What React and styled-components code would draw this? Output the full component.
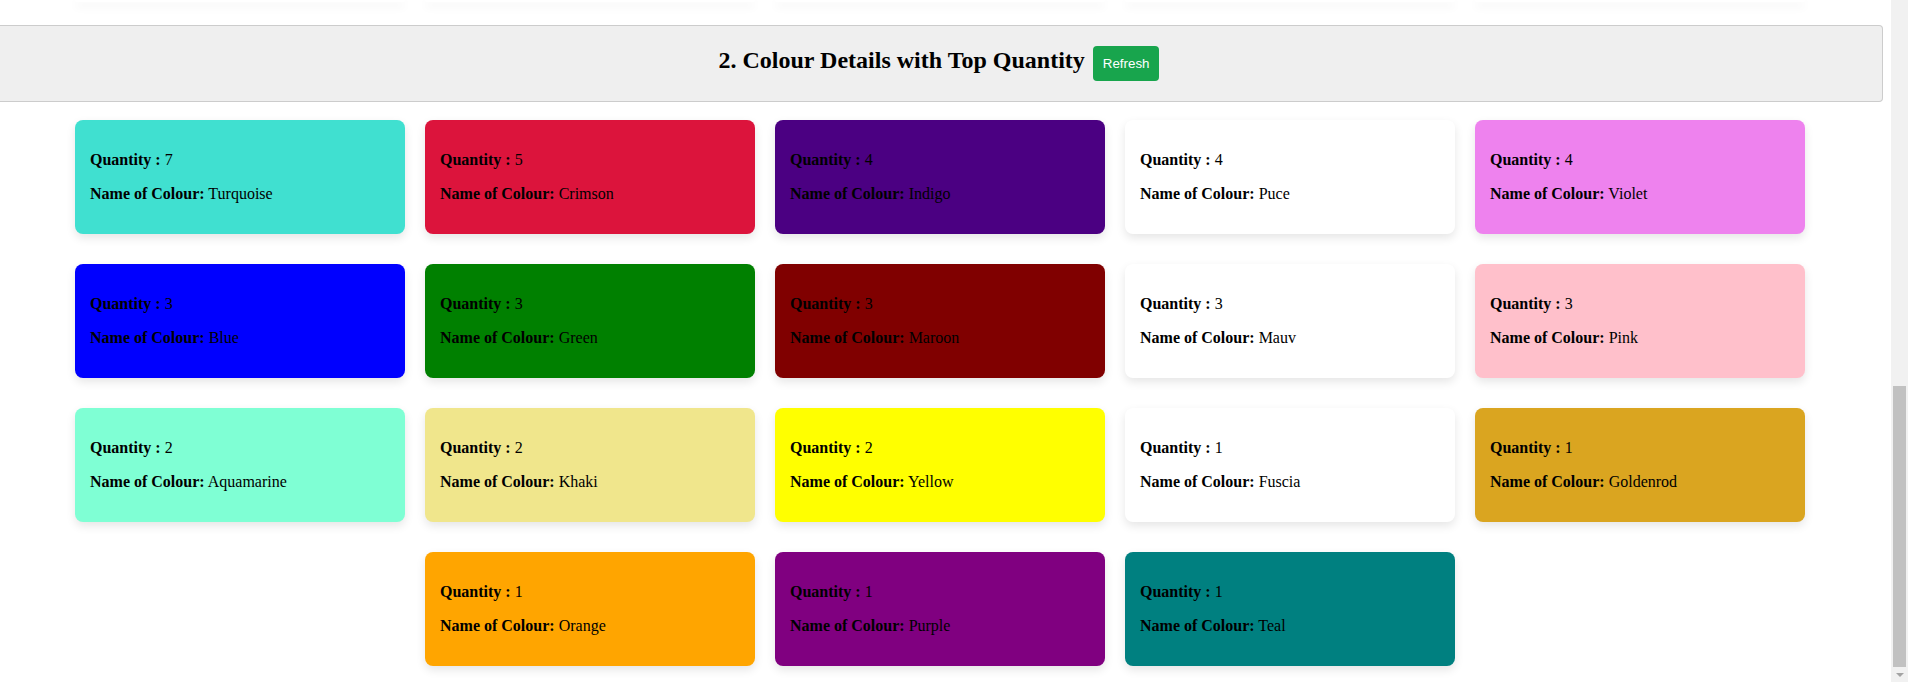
import React from "react";
import styled, { createGlobalStyle } from "styled-components";

const GlobalStyle = createGlobalStyle`
  html, body {
    margin: 0;
    padding: 0;
    background: #fff;
  }
  body {
    font-family: "Liberation Serif", "Times New Roman", serif;
    color: #000;
    overflow: hidden;
  }
`;

const topColours = [
  { id: 1, qty: 7, name: "Turquoise" },
  { id: 2, qty: 5, name: "Crimson" },
  { id: 3, qty: 4, name: "Indigo" },
  { id: 4, qty: 4, name: "Puce" },
  { id: 5, qty: 4, name: "Violet" },
  { id: 6, qty: 3, name: "Blue" },
  { id: 7, qty: 3, name: "Green" },
  { id: 8, qty: 3, name: "Maroon" },
  { id: 9, qty: 3, name: "Mauv" },
  { id: 10, qty: 3, name: "Pink" },
  { id: 11, qty: 2, name: "Aquamarine" },
  { id: 12, qty: 2, name: "Khaki" },
  { id: 13, qty: 2, name: "Yellow" },
  { id: 14, qty: 1, name: "Fuscia" },
  { id: 15, qty: 1, name: "Goldenrod" },
  { id: 16, qty: 1, name: "Orange" },
  { id: 17, qty: 1, name: "Purple" },
  { id: 18, qty: 1, name: "Teal" },
];

const Window = styled.div`
  display: flex;
  height: 100vh;
  overflow: hidden;
`;

const Main = styled.main`
  flex: 1;
  min-width: 0;
  padding-right: 8px;
`;

/* bottom edge of the previous section's last row, the rest is scrolled away */
const PrevRow = styled.div`
  display: flex;
  justify-content: center;
  padding-right: 3px;
`;

const CardTail = styled.div`
  width: 330px;
  height: 2px;
  margin: 0 10px;
  background: #fff;
  border-radius: 0 0 8px 8px;
  box-shadow: 0 4px 10px rgba(0, 0, 0, 0.1);
`;

const Section = styled.section`
  margin-top: 23px;
`;

const Bar = styled.div`
  padding-right: 4px;
  background: #efefef;
  border: 1px solid #ccc;
  border-left: none;
  border-radius: 0 4px 4px 0;
  text-align: center;
`;

const Title = styled.h2`
  margin: 20px 0;
  font-size: 24px;
  font-weight: bold;
`;

const RefreshButton = styled.button`
  margin-left: 2px;
  padding: 10px;
  border: none;
  border-radius: 4px;
  background: #18a54d;
  color: #fff;
  font-family: "Liberation Sans", Arial, sans-serif;
  font-size: 13.3333px;
  cursor: pointer;
`;

const Cards = styled.div`
  display: flex;
  flex-wrap: wrap;
  justify-content: center;
  padding: 3px 3px 0 0;
`;

const Card = styled.div`
  box-sizing: border-box;
  width: 330px;
  margin: 15px 10px;
  padding: 15px;
  border-radius: 8px;
  background: #fff;
  background: ${(p) => p.$colour};
  box-shadow: 0 4px 10px rgba(0, 0, 0, 0.1);
`;

const Line = styled.p`
  margin: 16px 0;
  font-size: 16px;
  line-height: 18px;
`;

const Scrollbar = styled.div`
  flex: 0 0 17px;
  display: flex;
  flex-direction: column;
  background: #f1f1f1;
`;

const ArrowButton = styled.div`
  flex: 0 0 ${(p) => p.$size}px;
  display: flex;
  align-items: center;
  justify-content: center;
`;

const Track = styled.div`
  flex: 1;
  display: flex;
  flex-direction: column;
  justify-content: flex-end;
  padding: 0 2px;
`;

const Thumb = styled.div`
  height: 281px;
  background: #c1c1c1;
`;

function DownArrow() {
  return (
    <svg width="8" height="4" viewBox="0 0 8 4">
      <polygon points="0,0 8,0 4,4" fill="#a3a3a3" />
    </svg>
  );
}

function ColourCard({ data }) {
  return (
    <Card $colour={data.name.toLowerCase()}>
      <Line>
        <b>Quantity :</b> {data.qty}
      </Line>
      <Line>
        <b>Name of Colour:</b> {data.name}
      </Line>
    </Card>
  );
}

export default function App() {
  return (
    <>
      <GlobalStyle />
      <Window>
        <Main>
          <PrevRow>
            {[1, 2, 3, 4, 5].map((n) => (
              <CardTail key={n} />
            ))}
          </PrevRow>
          <Section>
            <Bar>
              <Title>
                2. Colour Details with Top Quantity{" "}
                <RefreshButton type="button">Refresh</RefreshButton>
              </Title>
            </Bar>
            <Cards>
              {topColours.map((data) => (
                <ColourCard key={data.id} data={data} />
              ))}
            </Cards>
          </Section>
        </Main>
        <Scrollbar>
          <ArrowButton $size={17} />
          <Track>
            <Thumb />
          </Track>
          <ArrowButton $size={15}>
            <DownArrow />
          </ArrowButton>
        </Scrollbar>
      </Window>
    </>
  );
}
